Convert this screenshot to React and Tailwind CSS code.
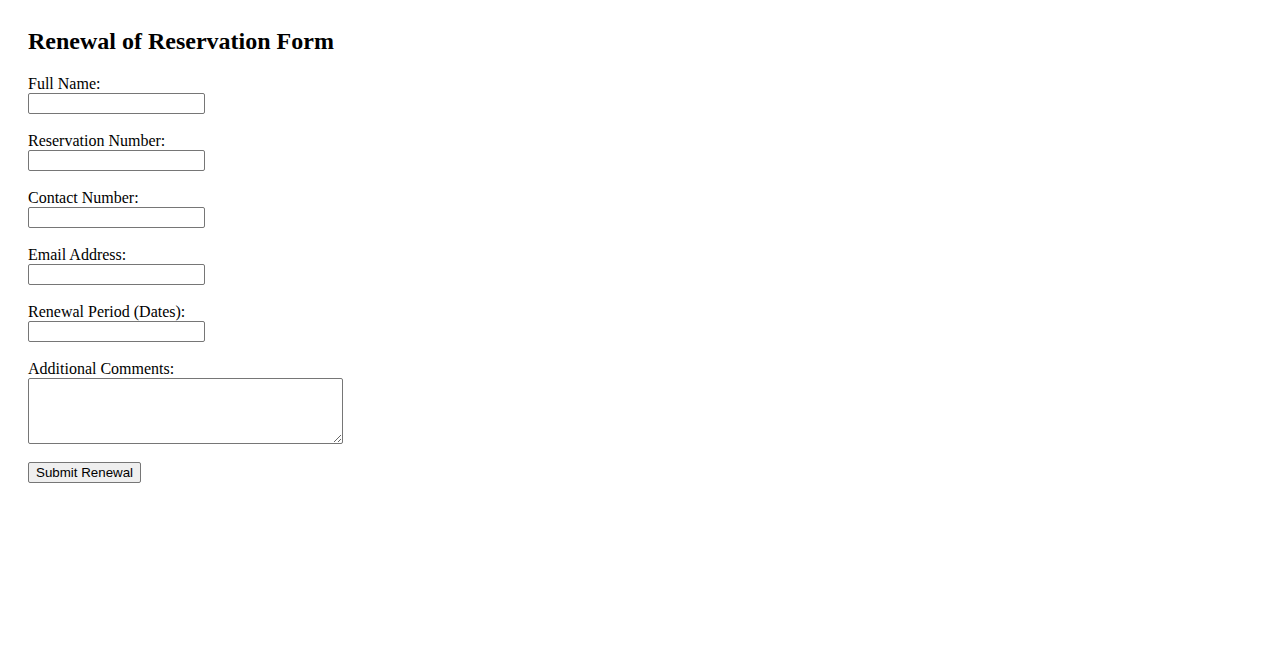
const fields = [
  'Full Name:',
  'Reservation Number:',
  'Contact Number:',
  'Email Address:',
  'Renewal Period (Dates):',
];

export default function App() {
  return (
    <div className="min-h-screen bg-white px-[28px] pt-[27px] font-['Liberation_Serif',serif] text-black">
      <h2 className="text-[24px] font-bold leading-[28px]">Renewal of Reservation Form</h2>
      <form className="mt-[20px]" onSubmit={(e) => e.preventDefault()}>
        {fields.map((label) => (
          <div key={label} className="mb-[18px]">
            <label className="block text-[16px] leading-[18px]">{label}</label>
            <input
              type="text"
              className="block h-[21px] w-[177px] rounded-[2px] border border-[#767676] bg-white px-[2px] text-[13px]"
            />
          </div>
        ))}
        <div className="mb-[18px]">
          <label className="block text-[16px] leading-[18px]">Additional Comments:</label>
          <textarea className="block h-[66px] w-[315px] resize rounded-[2px] border border-[#767676] bg-white" />
        </div>
        <button
          type="submit"
          className="block h-[21px] rounded-[2px] border border-[#767676] bg-[#efefef] px-[7px] font-['Liberation_Sans',Arial,sans-serif] text-[13.33px] leading-[15px]"
        >
          Submit Renewal
        </button>
      </form>
    </div>
  );
}
